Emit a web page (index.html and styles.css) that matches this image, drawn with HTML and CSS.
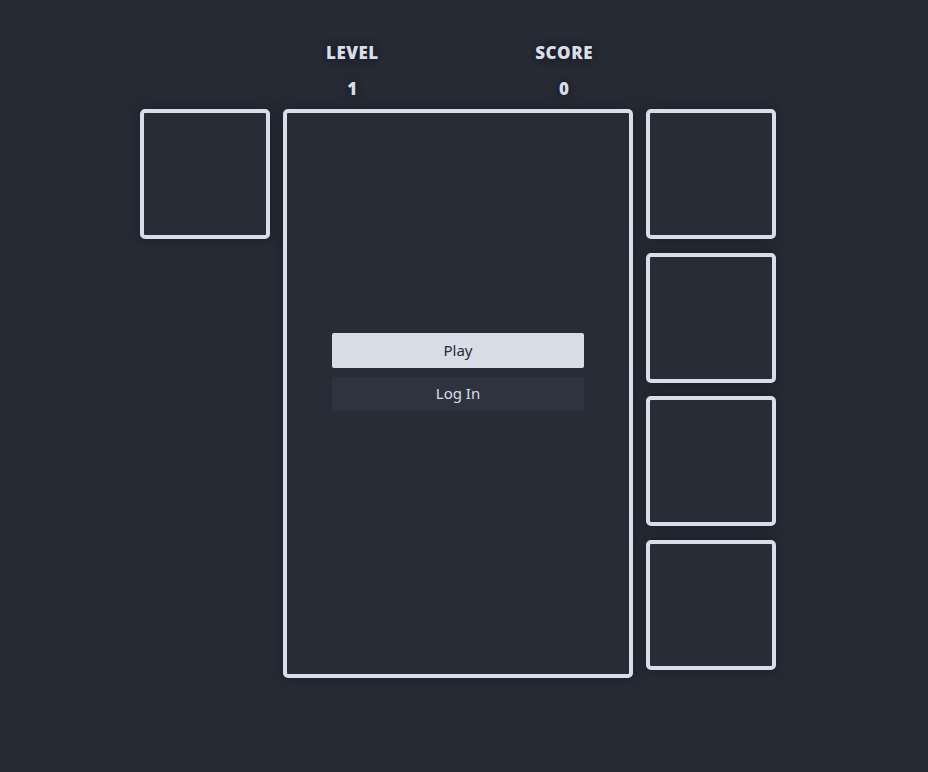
FILE: index.html
```html
<!DOCTYPE html>
<html lang="en">
<head>
    <meta charset="UTF-8">
    <meta name="viewport" content="width=device-width, initial-scale=1.0">
    <title>Tetris</title>
    <link rel="stylesheet" href="styles.css">
</head>
<body>
    <div class="game">
        <div class="stats">
            <div class="stat">
                <span class="stat-label">LEVEL</span>
                <span class="stat-value">1</span>
            </div>
            <div class="stat">
                <span class="stat-label">SCORE</span>
                <span class="stat-value">0</span>
            </div>
        </div>

        <div class="hold">
            <div class="box"></div>
        </div>

        <div class="board">
            <div class="menu">
                <button class="btn btn-play">Play</button>
                <button class="btn btn-login">Log In</button>
            </div>
        </div>

        <div class="next">
            <div class="box"></div>
            <div class="box"></div>
            <div class="box"></div>
            <div class="box"></div>
        </div>
    </div>
</body>
</html>
```

FILE: styles.css
```css
body {
    margin: 0;
    padding: 0 12px 0 0;
    background-color: #262a35;
    font-family: "Noto Sans", sans-serif;
    min-height: 772px;
}
.game {
    display: grid;
    grid-template-columns: 130px 350px 130px;
    grid-template-rows: auto auto;
    column-gap: 13px;
    justify-content: center;
}
.stats {
    grid-column: 2;
    grid-row: 1;
    display: flex;
    justify-content: space-between;
    padding: 41px 40px 8px 43px;
}
.stat {
    display: flex;
    flex-direction: column;
    align-items: center;
    gap: 12px;
    font-family: "Open Sans", sans-serif;
    font-weight: 800;
    font-size: 17px;
    line-height: 24px;
    color: #d8dde9;
    text-shadow: 0 0 8px rgba(0, 0, 0, 0.6);
    letter-spacing: 0.5px;
}
.hold {
    grid-column: 1;
    grid-row: 2;
}
.next {
    grid-column: 3;
    grid-row: 2;
    display: flex;
    flex-direction: column;
    gap: 13.6px;
}
.box, .board {
    box-sizing: border-box;
    border: 4px solid #d8dde9;
    border-radius: 5px;
    background-color: #282c37;
    box-shadow: 0 0 14px rgba(0, 0, 0, 0.3);
}
.box {
    width: 130px;
    height: 130px;
}
.board {
    grid-column: 2;
    grid-row: 2;
    height: 569px;
}
.menu {
    display: flex;
    flex-direction: column;
    gap: 9px;
    padding: 220px 45px 0;
}
.btn {
    height: 34px;
    border: none;
    border-radius: 2px;
    font-family: "Noto Sans", sans-serif;
    font-size: 15px;
    line-height: 20px;
    padding: 0 0 2px;
    cursor: pointer;
}
.btn-play {
    height: 35px;
    background-color: #d8dde8;
    color: #262a35;
}
.btn-login {
    background-color: #2f333f;
    color: #d8dde9;
}
```
